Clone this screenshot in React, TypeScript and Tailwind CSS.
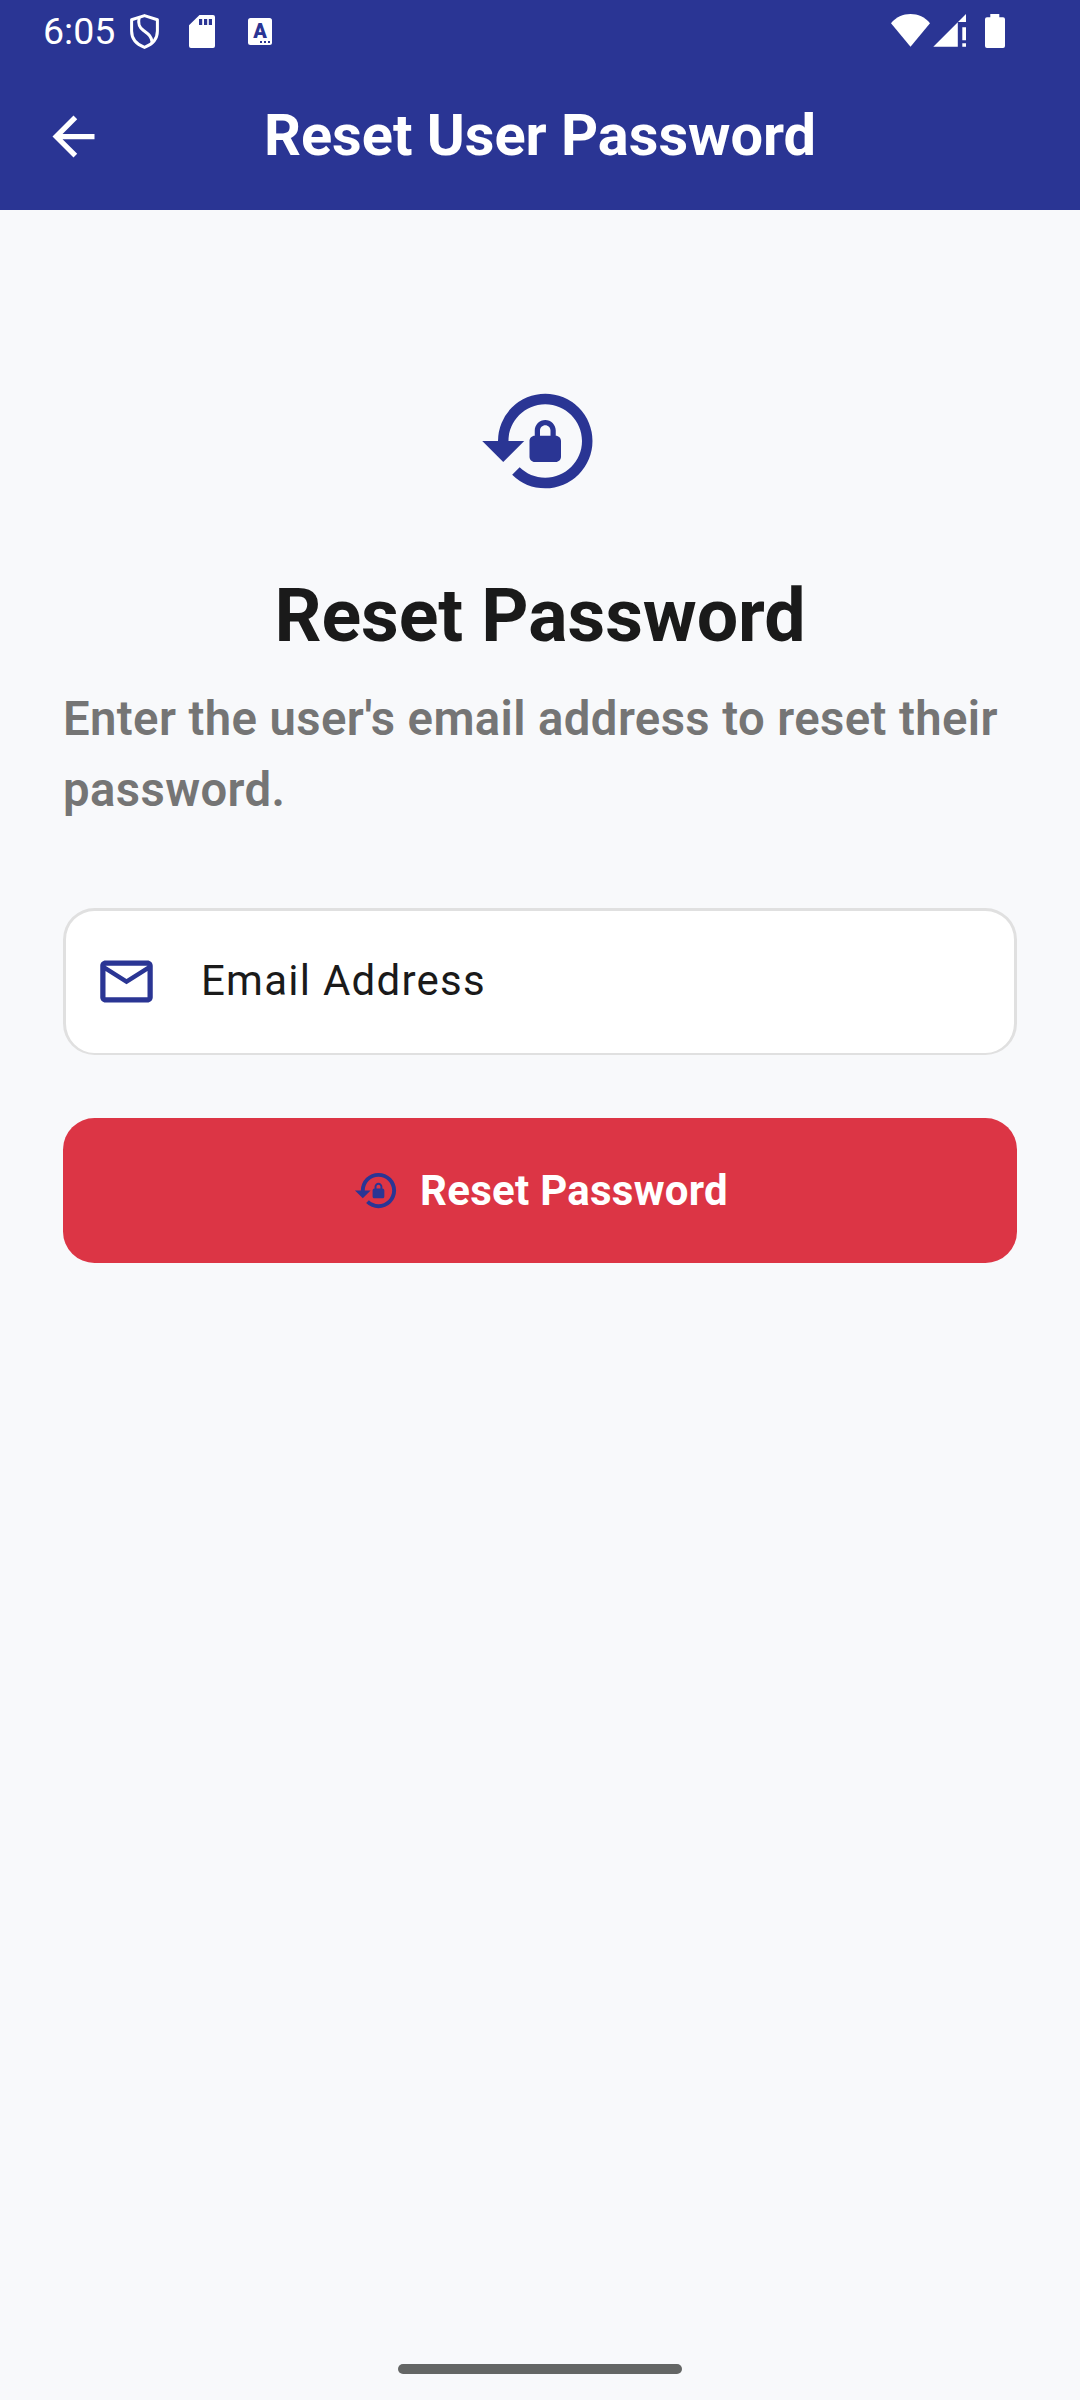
function LockResetIcon({ className }: { className: string }) {
  return (
    <svg viewBox="0 0 24 24" fill="currentColor" className={className}>
      <path d="M13 3a9 9 0 0 0-9 9H1l4 4 4-4H6c0-3.86 3.14-7 7-7s7 3.14 7 7-3.14 7-7 7c-1.9 0-3.62-.76-4.88-1.99L6.7 18.42A8.982 8.982 0 0 0 13 21a9 9 0 0 0 0-18zm2 8v-1c0-1.1-.9-2-2-2s-2 .9-2 2v1c-.55 0-1 .45-1 1v3c0 .55.45 1 1 1h4c.55 0 1-.45 1-1v-3c0-.55-.45-1-1-1zm-1 0h-2v-1c0-.55.45-1 1-1s1 .45 1 1v1z" />
    </svg>
  );
}

function StatusBar() {
  return (
    <div className="flex h-[63px] shrink-0 items-start pl-[43px] pr-[75px]">
      <span className="w-[87px] shrink-0 pt-[9px] text-[37.5px] leading-[44px]">6:05</span>
      {/* shield */}
      <svg viewBox="0 0 29 35" className="mt-[14px] h-[35px] w-[29px]" fill="none" stroke="currentColor" strokeWidth="3" strokeLinejoin="round">
        <path d="M14.5 1.6 27.4 5.800V17c0 7.4-5 13.4-12.9 16.4C6.600 30.4 1.600 24.400 1.600 17V5.800z" />
        <path d="M9.200 3.500C7.800 9.500 8.800 13 13.500 16.500c4.300 3.200 8.200 5.500 8.700 12" />
      </svg>
      {/* memory card */}
      <svg viewBox="0 0 26 33" className="ml-[30px] mt-[15px] h-[33px] w-[26px]" fill="currentColor">
        <path fillRule="evenodd" d="M10.500 0H24a2 2 0 0 1 2 2v29a2 2 0 0 1-2 2H2a2 2 0 0 1-2-2V10.300zM10 4v6h3.200V4zM15 4v6h3.200V4zM19.800 4v6H23V4z" />
      </svg>
      {/* keyboard input indicator */}
      <div className="relative ml-[33px] mt-[18px] flex h-[27px] w-[24px] justify-center rounded-[2.500px] bg-white">
        <span className="text-[20px] font-black leading-[27px] text-[#2a3594]">A</span>
        <div className="absolute bottom-[2px] right-[2px] flex gap-[2px]">
          <i className="size-[2px] bg-[#2a3594]" />
          <i className="size-[2px] bg-[#2a3594]" />
          <i className="size-[2px] bg-[#2a3594]" />
        </div>
      </div>
      {/* wifi */}
      <svg viewBox="0 0 39 33" className="ml-auto mt-[14px] h-[33px] w-[39px]" fill="currentColor">
        <path d="M19.500 32.700 0 9.200C5 3 12 0 19.500 0S34 3 39 9.200z" />
      </svg>
      {/* mobile signal */}
      <svg viewBox="0 0 33 33" className="ml-[3px] mt-[14px] h-[33px] w-[33px]" fill="currentColor">
        <path d="M.300 32.800 24.800 8.300V32.800zM25 8.100 33 0v8.100zM29.300 13.200H33v13h-3.700zM29.300 29.300H33v3.500h-3.700z" />
      </svg>
      {/* battery */}
      <svg viewBox="0 0 20 34" className="ml-[19px] mt-[14px] h-[34px] w-[20px]" fill="currentColor">
        <path d="M5.300 0h9v3.300H18a2 2 0 0 1 2 2V32a2 2 0 0 1-2 2H2a2 2 0 0 1-2-2V5.300a2 2 0 0 1 2-2h3.300z" />
      </svg>
    </div>
  );
}

function AppBar() {
  return (
    <div className="grid flex-1 grid-cols-[1fr_auto_1fr] items-center">
      <button className="ml-[42px] size-[63px]" aria-label="Back">
        <svg viewBox="0 0 24 24" className="size-[63px]" fill="currentColor">
          <path d="M20 11H7.830l5.590-5.590L12 4l-8 8 8 8 1.410-1.410L7.830 13H20z" />
        </svg>
      </button>
      <h1 className="pb-[4px] text-[57.75px] font-bold leading-[72px] tracking-[-0.03px]">Reset User Password</h1>
    </div>
  );
}

export default function App() {
  return (
    <div className="flex h-[2400px] w-[1080px] flex-col bg-[#f8f9fb] font-[Roboto,sans-serif]">
      <header className="flex h-[210px] flex-col bg-[#2a3594] text-white">
        <StatusBar />
        <AppBar />
      </header>
      <main className="flex flex-1 flex-col px-[63px] pt-[168px]">
        <LockResetIcon className="size-[126px] self-center text-[#2a3594]" />
        <h2 className="mt-[68px] text-center text-[73.5px] font-bold leading-[88px] tracking-[-0.08px] text-[#1a1a1a]">Reset Password</h2>
        <p className="mt-[24px] text-[47.25px] font-semibold leading-[71px] tracking-[0.4px] text-[#757575]">
          Enter the user's email address to reset their password.
        </p>
        <label className="mt-[82px] flex h-[147px] items-center rounded-[31.5px] border-[3px] border-b-2 border-[#e0e0e0] bg-white pl-[29px]">
          <svg viewBox="0 0 24 24" className="-mt-[2px] size-[63px] text-[#2a3594]" fill="currentColor">
            <path d="M22 6c0-1.100-.900-2-2-2H4c-1.100 0-2 .900-2 2v12c0 1.100.900 2 2 2h16c1.100 0 2-.900 2-2V6zm-2 0-8 5-8-5zm0 12H4V8l8 5 8-5z" />
          </svg>
          <span className="-mt-[2px] ml-[43px] text-[42px] leading-[50px] tracking-[1.25px] text-[#1a1a1a]">Email Address</span>
        </label>
        <button className="mt-[63px] flex h-[145px] items-center justify-center gap-[20px] rounded-[31.5px] bg-[#dc3545] pl-[1px]">
          <LockResetIcon className="size-[47px] text-[#2a3594]" />
          <span className="text-[42px] font-bold leading-[50px] tracking-[0.26px] text-white">Reset Password</span>
        </button>
      </main>
      <footer className="flex h-[36px] justify-center">
        <div className="h-[10px] w-[284px] rounded-full bg-[#646665]" />
      </footer>
    </div>
  );
}
